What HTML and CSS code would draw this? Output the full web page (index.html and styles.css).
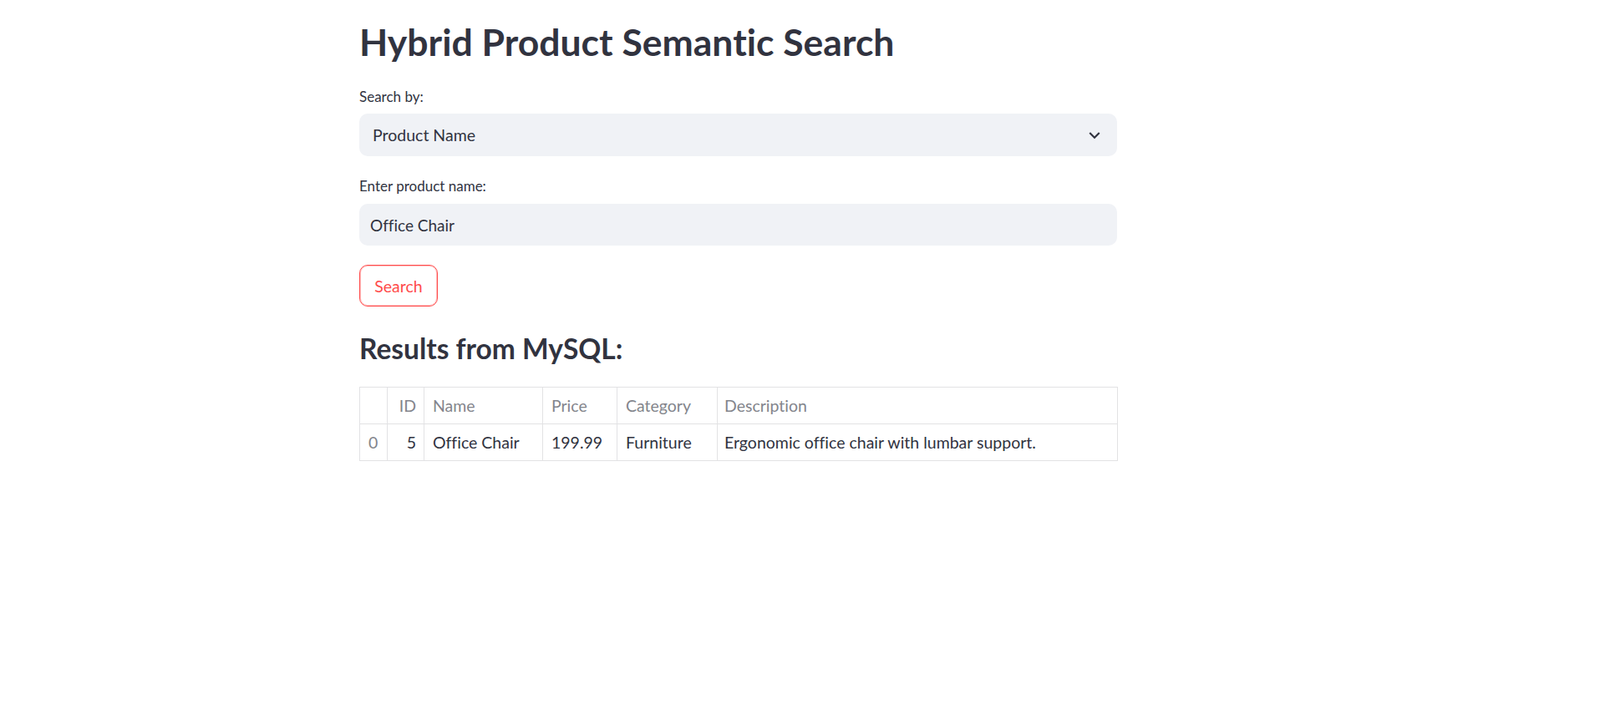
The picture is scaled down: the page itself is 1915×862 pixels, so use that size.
FILE: index.html
```html
<!DOCTYPE html>
<html lang="en">
<head>
<meta charset="utf-8">
<title>Hybrid Product Semantic Search</title>
<link rel="stylesheet" href="styles.css">
</head>
<body>
<main class="main">
  <h1 class="title">Hybrid Product Semantic Search</h1>

  <div class="label label-first">Search by:</div>
  <div class="select">
    <span class="select-value">Product Name</span>
    <svg class="chevron" viewBox="0 0 24 24" width="26" height="26" aria-hidden="true"><path d="M16.59 8.59L12 13.17 7.41 8.59 6 10l6 6 6-6z" fill="#31333f"/></svg>
  </div>

  <div class="label label-second">Enter product name:</div>
  <div class="input">Office Chair</div>

  <button class="btn" type="button">Search</button>

  <h3 class="subheader">Results from MySQL:</h3>

  <div class="grid">
    <div class="cell head"></div>
    <div class="cell head num">ID</div>
    <div class="cell head">Name</div>
    <div class="cell head">Price</div>
    <div class="cell head">Category</div>
    <div class="cell head">Description</div>

    <div class="cell idx">0</div>
    <div class="cell num">5</div>
    <div class="cell">Office Chair</div>
    <div class="cell">199.99</div>
    <div class="cell">Furniture</div>
    <div class="cell">Ergonomic office chair with lumbar support.</div>
  </div>
</main>
</body>
</html>
```

FILE: styles.css
```css
* { box-sizing: border-box; }

body {
  margin: 0;
  background: #ffffff;
  color: #31333f;
  font-family: Lato, "Open Sans", sans-serif;
  font-variant-ligatures: none;
}

.main {
  margin-left: 430px;
  width: 907px;
  padding-top: 23px;
}

.title {
  margin: 0;
  font-size: 44.5px;
  font-weight: 700;
  line-height: 54px;
}

.label {
  font-size: 17px;
  line-height: 20px;
}
.label-first { margin-top: 29px; }
.label-second { margin-top: 26px; }

.select {
  margin-top: 10px;
  height: 51px;
  background: #f0f2f6;
  border-radius: 10px;
  display: flex;
  align-items: center;
  justify-content: space-between;
  padding: 0 14px 0 16px;
  font-size: 19.5px;
}

.chevron { display: block; }

.input {
  margin-top: 11px;
  height: 50px;
  background: #f0f2f6;
  border-radius: 10px;
  display: flex;
  align-items: center;
  padding: 0 13px;
  font-size: 19px;
}

.btn {
  display: block;
  margin-top: 23px;
  width: 94px;
  height: 50px;
  background: #ffffff;
  border: 1px solid #ff4b4b;
  box-shadow: inset 0 0 0 1px rgba(255, 75, 75, 0.35);
  border-radius: 10px;
  color: #ff4b4b;
  font-family: inherit;
  font-size: 19.5px;
  padding: 0;
}

.subheader {
  margin: 30px 0 0;
  font-size: 33.5px;
  font-weight: 700;
  line-height: 40px;
}

.grid {
  margin-top: 26px;
  width: 908px;
  display: grid;
  grid-template-columns: 33px 44px 142px 89px 120px 1fr;
  grid-auto-rows: 44px;
  border-top: 1px solid #e2e2e4;
  border-left: 1px solid #e2e2e4;
  font-size: 19.5px;
}

.cell {
  display: flex;
  align-items: center;
  padding: 0 10px;
  border-right: 1px solid #e2e2e4;
  border-bottom: 1px solid #e2e2e4;
  white-space: nowrap;
  overflow: hidden;
}

.cell:nth-child(6n) { padding-left: 8px; }

.head { color: #83858c; }
.idx { color: #83858c; }
.num { justify-content: flex-end; padding-right: 9px; }
```
